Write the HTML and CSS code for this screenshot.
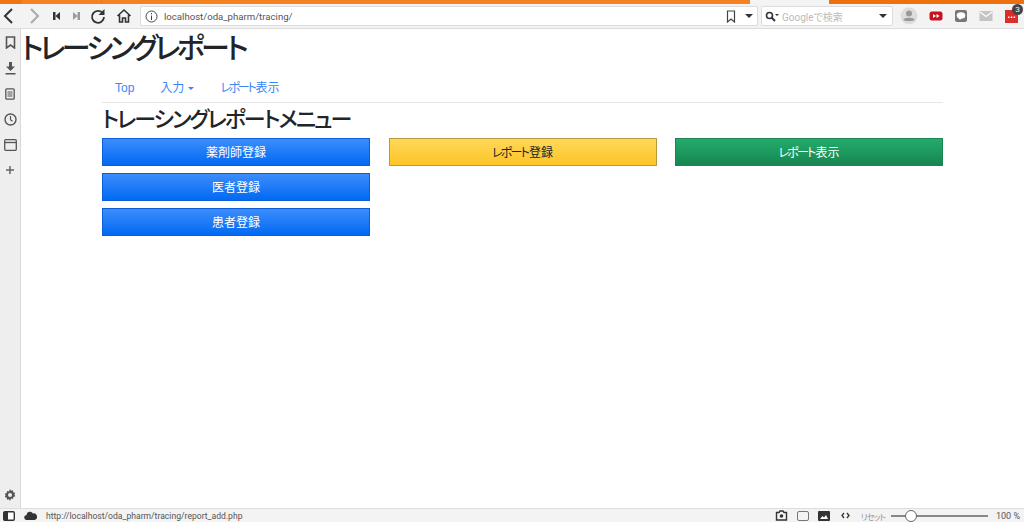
FILE: index.html
```html
<!DOCTYPE html>
<html lang="ja">
<head>
<meta charset="utf-8">
<title>トレーシングレポート</title>
<link rel="stylesheet" href="styles.css">
</head>
<body>
<div class="tabs"><i class="t1"></i><i class="t2"></i><i class="t3"></i><i class="t4"></i><i class="t5"></i></div>
<div class="toolbar">
  <svg class="ic back" width="18" height="18" viewBox="0 0 18 18"><path d="M12 2 5 9l7 7" fill="none" stroke="#333" stroke-width="2"/></svg>
  <svg class="ic fwd" width="18" height="18" viewBox="0 0 18 18"><path d="M6 2l7 7-7 7" fill="none" stroke="#aaa" stroke-width="2"/></svg>
  <svg class="ic first" width="18" height="18" viewBox="0 0 18 18"><path d="M5 5h2.500v8H5zM7.500 9 12 5v8z" fill="#333"/></svg>
  <svg class="ic last" width="18" height="18" viewBox="0 0 18 18"><path d="M10.500 5H13v8h-2.500zM10.500 9 6 5v8z" fill="#999"/></svg>
  <svg class="ic reload" width="18" height="18" viewBox="0 0 18 18"><path d="M14 6.500A6 6 0 1 0 15 10" fill="none" stroke="#333" stroke-width="1.800"/><path d="M15.500 2v6h-6z" fill="#333"/></svg>
  <svg class="ic home" width="18" height="18" viewBox="0 0 18 18"><path d="M2.500 9 9 3l6.500 6M4.500 8v7h3v-4h3v4h3V8" fill="none" stroke="#333" stroke-width="1.600"/></svg>
  <div class="address">
    <svg width="13" height="13" viewBox="0 0 13 13"><circle cx="6.500" cy="6.500" r="5.500" fill="none" stroke="#444"/><path d="M6 5.500h1V10H6zM6 3h1v1.200H6z" fill="#444"/></svg>
    <span class="url">localhost/oda_pharm/tracing/</span>
    <svg class="bm" width="10" height="13" viewBox="0 0 10 13"><path d="M1.500 1h7v11L5 9l-3.500 3z" fill="none" stroke="#444" stroke-width="1.200"/></svg>
    <span class="caret"></span>
  </div>
  <div class="search">
    <svg width="15" height="11" viewBox="0 0 15 11"><circle cx="4.500" cy="4.500" r="3" fill="none" stroke="#333" stroke-width="1.600"/><path d="M6.500 6.500 10 10" stroke="#333" stroke-width="2"/><path d="M10 3h4l-2 2z" fill="#333"/></svg>
    <span class="placeholder">Googleで検索</span>
    <span class="caret"></span>
  </div>
  <div class="exts">
    <svg width="18" height="18" viewBox="0 0 18 18"><circle cx="9" cy="9" r="8.500" fill="#ddd"/><circle cx="9" cy="6.500" r="3" fill="#999"/><path d="M3.500 13c0-3 11-3 11 0 0 1.500-11 1.500-11 0z" fill="#999"/></svg>
    <svg width="14" height="12" viewBox="0 0 14 12"><rect x="0.500" y="1.500" width="13" height="9" rx="2.500" fill="#c8101e"/><path d="M4 4l3 2-3 2zM7.500 4l3 2-3 2z" fill="#fff"/></svg>
    <svg width="14" height="14" viewBox="0 0 14 14"><rect x="1" y="1" width="12" height="12" rx="2" fill="#777"/><ellipse cx="7" cy="6.500" rx="4.300" ry="3.300" fill="#fff"/><path d="M4.500 8.800h3L6 11z" fill="#fff"/></svg>
    <svg width="14" height="10" viewBox="0 0 14 10"><rect width="13" height="10" x="0.500" fill="#c4c4c4"/><path d="M1 1l6 4.500L13 1" fill="none" stroke="#fff" stroke-width="1.200"/></svg>
    <div class="cal">
      <svg width="13" height="13" viewBox="0 0 13 13"><rect width="13" height="13" y="0" fill="#d9302a"/><path d="M3 6.500h1.500v1.500H3zM5.800 6.500h1.500v1.500H5.800zM8.600 6.500h1.500v1.500H8.600z" fill="#fff"/></svg>
      <span class="badge">3</span>
    </div>
  </div>
</div>
<div class="middle">
  <aside class="side">
    <svg width="11" height="13" viewBox="0 0 11 13"><path d="M1.500 1h8v11L5.500 9l-4 3z" fill="none" stroke="#555" stroke-width="1.600"/></svg>
    <svg width="11" height="13" viewBox="0 0 11 13"><path d="M4 0h3v4.500h3L5.500 9 1 4.500h3z M0.500 11h10v1.500H.5z" fill="#555"/></svg>
    <svg width="10" height="12" viewBox="0 0 10 12"><rect x=".8" y=".8" width="8.400" height="10.400" rx="1" fill="#eee" stroke="#555" stroke-width="1.300"/><path d="M2.500 4h5M2.500 6h5M2.500 8h5" stroke="#555"/></svg>
    <svg width="13" height="13" viewBox="0 0 13 13"><circle cx="6.500" cy="6.500" r="5.500" fill="none" stroke="#555" stroke-width="1.400"/><path d="M6.500 3v3.700l2 1.500" fill="none" stroke="#555" stroke-width="1.200"/></svg>
    <svg width="13" height="12" viewBox="0 0 13 12"><rect x=".7" y=".7" width="11.600" height="10.600" rx="1" fill="none" stroke="#555" stroke-width="1.300"/><path d="M1 3.500h11" stroke="#555" stroke-width="1.300"/></svg>
    <svg class="plus" width="8" height="8" viewBox="0 0 8 8"><path d="M3.200 0h1.500v3.200H8v1.500H4.700V8H3.200V4.700H0V3.200h3.200z" fill="#666"/></svg>
    <svg class="gear" width="12" height="12" viewBox="0 0 12 12"><path d="M6 0l1 1.700 1.900-.5.400 2 1.900.7-.8 1.600.9 1.700-1.900.7-.4 2-1.900-.5L6 12l-1-1.700-1.900.5-.4-2L.8 8.100l.8-1.700-.8-1.600 1.900-.7.400-2 1.900.5z" fill="#555"/><circle cx="6" cy="6" r="2" fill="#eee"/></svg>
  </aside>
  <main class="page">
    <h1>トレーシングレポート</h1>
    <div class="container">
      <nav class="nav">
        <a>Top</a>
        <a class="dropdown">入力<span class="drop"></span></a>
        <a><span class="kana">レポート</span>表示</a>
      </nav>
      <h2>トレーシングレポートメニュー</h2>
      <div class="menu">
        <div class="col">
          <a class="btn blue">薬剤師登録</a>
          <a class="btn blue">医者登録</a>
          <a class="btn blue">患者登録</a>
        </div>
        <div class="col"><a class="btn yellow"><span class="kana">レポート</span>登録</a></div>
        <div class="col"><a class="btn green"><span class="kana">レポート</span>表示</a></div>
      </div>
    </div>
  </main>
</div>
<footer class="status">
  <svg width="12" height="10" viewBox="0 0 12 10"><rect x=".7" y=".7" width="10.600" height="8.600" rx="1.200" fill="#fff" stroke="#333" stroke-width="1.400"/><rect x="1" y="1" width="4" height="8" fill="#333"/></svg>
  <svg class="cloud" width="13" height="9" viewBox="0 0 13 9"><path d="M3 9a2.500 2.500 0 0 1-.5-5A3.500 3.500 0 0 1 9 2.500 3.200 3.200 0 0 1 10.500 9z" fill="#333"/></svg>
  <span class="link">http://localhost/oda_pharm/tracing/report_add.php</span>
  <span class="spacer"></span>
  <svg width="13" height="11" viewBox="0 0 13 11"><path d="M1.500 2.500h2.500l1-1.500h3l1 1.500h2.500v7.500h-10z" fill="none" stroke="#333" stroke-width="1.400"/><circle cx="6.500" cy="6" r="1.800" fill="#333"/></svg>
  <svg width="12" height="10" viewBox="0 0 12 10"><rect x=".5" y=".5" width="11" height="9" rx="1.500" fill="none" stroke="#777"/></svg>
  <svg width="12" height="10" viewBox="0 0 12 10"><rect width="12" height="10" rx="1" fill="#333"/><path d="M2 8l2.500-3 1.500 1.500L8 4l2 4z" fill="#fff"/></svg>
  <svg class="code" width="9" height="7" viewBox="0 0 9 7"><path d="M3 1 1 3.500 3 6M6 1l2 2.500L6 6" fill="none" stroke="#333" stroke-width="1.300"/></svg>
  <span class="reset">リセット</span>
  <div class="slider"><span class="knob"></span></div>
  <span class="zoom">100 %</span>
</footer>
</body>
</html>
```
FILE: styles.css
```css
* { box-sizing: border-box; }
html, body { margin: 0; height: 522px; overflow: hidden; }
body {
  width: 1024px;
  display: flex;
  flex-direction: column;
  background: #fff;
  color: #212529;
  font-family: "Liberation Sans", "Noto Sans CJK JP", sans-serif;
  font-feature-settings: "palt";
}
.tabs { height: 4px; display: flex; background: #f5f5f5; flex: none; }
.tabs i { display: block; height: 4px; }
.t1 { width: 21px; background: #ee7414; }
.t2 { width: 80px; background: #f58220; border-left: 1px solid #e87a20; }
.t3 { width: 649px; background: #f58220; border-left: 1px solid #e87a20; }
.t4 { width: 79px; background: #f4f4f4; }
.t5 { width: 195px; background: #ee7110; }
.toolbar {
  height: 25px;
  flex: none;
  display: flex;
  align-items: center;
  background: #f3f3f3;
  border-bottom: 1px solid #ddd;
}
.ic { flex: none; }
.back { margin-right: 7px; }
.fwd { margin-right: 5px; }
.first { margin-right: 1px; }
.last { margin-right: 4px; }
.reload { margin-right: 8px; }
.home { margin-right: 7px; }
.address, .search {
  height: 20px;
  background: #fff;
  border: 1px solid #dcdcdc;
  border-radius: 2px;
  display: flex;
  align-items: center;
}
.address { width: 618px; padding: 0 4px 0 4px; gap: 6px; }
.url { font-size: 9.600px; color: #555; flex: 1; font-family: Roboto, "Liberation Sans", sans-serif; }
.bm { margin-right: 3px; }
.caret { width: 0; height: 0; border: 4px solid transparent; border-top: 4px solid #333; border-bottom: 0; }
.search { width: 132px; margin-left: 3px; padding: 0 5px 0 3px; gap: 2px; }
.placeholder { font-size: 10px; color: #bbb; flex: 1; font-family: Roboto, "Noto Sans CJK JP", sans-serif; }
.exts { display: flex; align-items: center; gap: 11px; margin-left: 7px; }
.cal { position: relative; display: flex; margin-left: 1px; }
.badge {
  position: absolute; left: 7px; top: -6px; width: 11px; height: 11px; border-radius: 50%;
  background: #444; color: #fff; font-size: 8px; line-height: 11px; text-align: center;
}
.middle { flex: 1; display: flex; min-height: 0; }
.side {
  width: 21px; flex: none; background: #eee; border-right: 1px solid #d8d8d8;
  display: flex; flex-direction: column; align-items: center; padding-top: 7px; gap: 13px;
}
.side .plus { margin-top: 2px; }
.side .gear { margin-top: auto; margin-bottom: 7px; }
.page { flex: 1; min-width: 0; }
h1 {
  margin: 0; padding-bottom: 4px; font-size: 29px; font-weight: 500; line-height: 35px; letter-spacing: -3.500px;
  font-family: "Noto Sans CJK JP", sans-serif; color: #212529;
}
.container { margin: 0 0 0 81px; width: 841px; }
.nav { display: flex; height: 35px; padding-top: 10px; border-bottom: 1px solid #e6e6e6; }
.nav a { font-size: 12px; line-height: 20px; color: #3b85f6; padding: 0 13px; }
.kana { letter-spacing: -1.800px; margin-right: 1px; }
.nav .kana { letter-spacing: -2.300px; }
.drop { display: inline-block; margin-left: 4px; vertical-align: 2px; border: 3.500px solid transparent; border-top-color: #3b85f6; border-bottom: 0; }
h2 {
  margin: 0; height: 35px; font-size: 22px; line-height: 28px; font-weight: 500; letter-spacing: -2px;
  font-family: "Noto Sans CJK JP", sans-serif;
}
.menu { display: grid; grid-template-columns: repeat(3, 268px); column-gap: 18.500px; }
.col { display: flex; flex-direction: column; gap: 7px; }
.btn {
  height: 28px; padding-bottom: 2px; display: flex; align-items: center; justify-content: center;
  font-size: 12px; border: 1px solid; color: #fff;
  font-family: "Noto Sans CJK JP", sans-serif;
}
.blue { background: linear-gradient(#3d8dfb, #0169f3); border-color: #0b5ed7; }
.yellow { background: linear-gradient(#ffd758, #fdc526); border-color: #b99a3a; color: #212529; }
.green { background: linear-gradient(#22ad6b, #178552); border-color: #1d8555; }
.status {
  height: 14px; flex: none; background: #f3f3f3; border-top: 1px solid #ddd;
  display: flex; align-items: center; padding-left: 3px;
}
.cloud { margin-left: 10px; }
.link { margin-left: 9px; font-size: 8.600px; color: #555; font-family: Roboto, "Liberation Sans", sans-serif; }
.spacer { flex: 1; }
.status svg + svg { margin-left: 9px; }
.status .code { margin-left: 11px; }
.reset { margin-left: 11px; font-size: 8.500px; letter-spacing: -1px; color: #999; font-family: "Noto Sans CJK JP", sans-serif; }
.slider { position: relative; width: 97px; height: 2px; margin-left: 6px; background: #888; }
.knob { position: absolute; left: 14px; top: -5px; width: 12px; height: 12px; border-radius: 50%; background: #fff; border: 1px solid #666; }
.zoom { margin: 0 2px 0 8px; width: 26px; font-size: 9px; color: #555; font-family: Roboto, sans-serif; }
```
